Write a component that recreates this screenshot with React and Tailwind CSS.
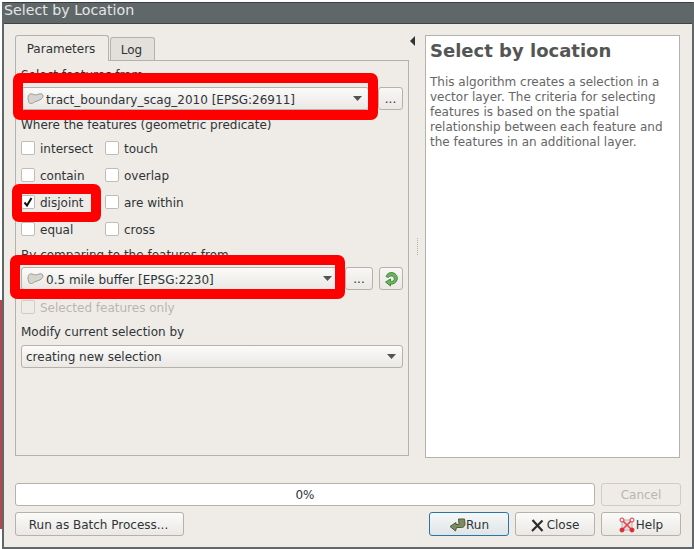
const LayerIcon = () => (
  <svg width="17" height="12" viewBox="0 0 17 12" className="shrink-0">
    <path d="M1 4.5C1 1.5 3 0.5 5 1C7.5 1.8 9 2.4 11.5 1.2C13.5 0.4 16 0.6 16 3.2C16 5.2 14.3 5.8 13 6.8C11.5 7.8 9.5 8 7.5 9C5 11 2.2 11.4 1.6 8.5C1.3 7 1 6 1 4.5Z" fill="#d6d4cf" stroke="#9c9b95" strokeWidth="1" />
  </svg>
);

const Caret = () => (
  <svg width="9" height="5" viewBox="0 0 9 5" className="shrink-0"><path d="M0 0H9L4.5 5Z" fill="#55534f" /></svg>
);

const Combo = ({ className, children }) => (
  <div className={`h-[23px] flex items-center justify-between pl-[5px] pr-[6px] rounded-[3px] border border-[#b5b1ab] bg-gradient-to-b from-[#fbfbfa] to-[#ebe8e5] shrink-0 ${className}`}>
    <div className="flex items-center gap-[2px] whitespace-nowrap">{children}</div>
    <Caret />
  </div>
);

const Dots = ({ className }) => (
  <div className={`h-[23px] rounded-[3px] border border-[#b5b1ab] bg-gradient-to-b from-[#f8f7f5] to-[#ebe8e5] flex items-center justify-center text-[12px] shrink-0 ${className}`}>...</div>
);

const Check = ({ label, checked, disabled }) => (
  <div className={`flex items-center gap-[5px] h-[14px] whitespace-nowrap ${disabled ? "text-[#b9b6b2]" : ""}`}>
    <div className={`w-[14px] h-[14px] rounded-[2px] border flex items-center justify-center shrink-0 ${disabled ? "border-[#cfccc8] bg-[#efebe7]" : "border-[#c0bdb8] bg-white"}`}>
      {checked && (
        <svg width="10" height="10" viewBox="0 0 10 10"><path d="M1.5 5.5L4 8.5L8.5 1" fill="none" stroke="#111" strokeWidth="2" /></svg>
      )}
    </div>
    <span className="pt-[2px]">{label}</span>
  </div>
);

const Btn = ({ className = "", children }) => (
  <div className={`h-[24px] rounded-[3px] border flex items-center justify-center text-[12px] ${className || ""}`}>{children}</div>
);

const plain = "border-[#b5b1ab] bg-gradient-to-b from-[#fbfbfa] to-[#ebe8e5]";

const Highlight = ({ className }) => (
  <div className={`absolute border-[10px] border-[#ff0000] rounded-[7px] pointer-events-none ${className}`} />
);

export default function App() {
  return (
    <div className="relative w-[694px] h-[549px] flex bg-white overflow-hidden font-['DejaVu_Sans',sans-serif] text-[12px] leading-[14px] text-[#2e3436]">
      <div className="w-[2px] flex flex-col pt-[300px]">
        <div className="h-[229px] bg-[#b5474f]" />
      </div>
      <div className="flex-1 mt-[2px] flex flex-col border-t border-t-[#3c3f40] border-l-2 border-r-2 border-b-2 border-[#5f6769] bg-[#efebe7]">
        <div className="h-[21px] shrink-0 bg-[#5f6769] border-b border-b-[#3f4445] pl-[0px] pb-[6px] flex items-center text-[#e6e6e6] text-[14.2px] leading-[18px]">Select by Location</div>

        <div className="flex pl-[11px] pt-[11px] h-[434px] shrink-0">
          <div className="w-[394px] shrink-0 flex flex-col">
            <div className="flex h-[25px] items-end relative z-10">
              <div className="w-[94px] h-[26px] -mb-px pr-[2px] bg-[#efebe7] border border-b-0 border-[#b5b1ab] rounded-t-[3px] flex items-center justify-center">Parameters</div>
              <div className="w-[45px] h-[23px] ml-px pr-[2px] bg-[#e3dfda] border border-b-0 border-[#b5b1ab] rounded-t-[3px] flex items-center justify-center pt-[2px]">Log</div>
            </div>
            <div className="h-[396px] border border-[#b5b1ab] px-[5px] pt-[6px] flex flex-col">
              <div className="h-[14px] leading-[16px]">Select features from</div>
              <div className="flex mt-[6px] gap-[9px]">
                <Combo className="w-[348px]"><LayerIcon /><span className="pt-[2px]">tract_boundary_scag_2010 [EPSG:26911]</span></Combo>
                <Dots className="w-[25px]" />
              </div>
              <div className="h-[14px] mt-[7px] leading-[16px]">Where the features (geometric predicate)</div>
              <div className="grid grid-cols-[84px_84px] gap-y-[13px] mt-[10px]">
                <Check label="intersect" />
                <Check label="touch" />
                <Check label="contain" />
                <Check label="overlap" />
                <Check label="disjoint" checked />
                <Check label="are within" />
                <Check label="equal" />
                <Check label="cross" />
              </div>
              <div className="h-[14px] mt-[11px] leading-[16px]">By comparing to the features from</div>
              <div className="flex mt-[6px]">
                <Combo className="w-[318px]"><LayerIcon /><span className="pt-[2px]">0.5 mile buffer [EPSG:2230]</span></Combo>
                <Dots className="w-[28px] ml-[6px]" />
                <div className="w-[24px] h-[23px] ml-[6px] rounded-[3px] border border-[#b5b1ab] bg-gradient-to-b from-[#f8f7f5] to-[#ebe8e5] flex items-center justify-center shrink-0">
                  <svg width="16" height="16" viewBox="0 0 16 16">
                    <path d="M3 5.5C4 2.5 7 1 10 1.8C13.5 2.8 15 6 14 9C13 12 10 13.5 7.5 13V15L2.5 11L7.5 8V10.2C9 10.8 11 10 11.3 8.2C11.6 6.6 10.5 5 8.5 5C7 5 6.2 5.5 5.5 6.5Z" fill="#6cb35f" stroke="#3f8a3a" strokeWidth="1" />
                  </svg>
                </div>
              </div>
              <div className="mt-[10px]"><Check label="Selected features only" disabled /></div>
              <div className="h-[14px] mt-[10px] leading-[16px]">Modify current selection by</div>
              <div className="flex mt-[7px]">
                <Combo className="w-[382px]"><span className="-ml-px">creating new selection</span></Combo>
              </div>
            </div>
          </div>

          <div className="w-[16px] shrink-0 flex flex-col items-center">
            <svg width="6" height="10" viewBox="0 0 6 10" className="mt-[1px] -ml-[8px]"><path d="M5 0V10L0 5Z" fill="#2e3436" /></svg>
            <div className="w-px h-[17px] mt-[192px] border-l border-dotted border-[#b5b1ab]" />
          </div>

          <div className="w-[255px] h-[423px] shrink-0 border border-[#b5b1ab] bg-white px-[4px] pt-[4px] text-[#666]">
            <div className="text-[18px] leading-[21px] font-bold text-[#555]">Select by location</div>
            <p className="mt-[14px] leading-[15px]">This algorithm creates a selection in a vector layer. The criteria for selecting features is based on the spatial relationship between each feature and the features in an additional layer.</p>
          </div>
        </div>

        <div className="pl-[11px] pr-[11px] flex flex-col gap-[6px] mt-[25px]">
          <div className="flex gap-[6px]">
            <div className="w-[580px] h-[23px] rounded-[3px] border border-[#b5b1ab] bg-white flex items-center justify-center">0%</div>
            <div className="w-[80px] h-[23px] rounded-[3px] border border-[#cfccc8] bg-[#efebe7] flex items-center justify-center text-[#b9b6b2]">Cancel</div>
          </div>
          <div className="flex gap-[6px]">
            <Btn className={`w-[169px] pt-[2px] pr-[2px] ${plain}`}>Run as Batch Process...</Btn>
            <div className="w-[233px]" />
            <Btn className="w-[80px] pt-[2px] border-[#2a75a8] bg-gradient-to-b from-[#f6f8f8] to-[#dfe4e6]">
              <svg width="17" height="14" viewBox="0 0 17 14"><path d="M9.5 1H15.5L16 6C16 8 14.5 9.5 12.5 9.5H7.5L6.5 13L1 8.5L7 4.5V6.5H10Z" fill="#7d8a62" stroke="#4d5a38" strokeWidth="1" /></svg>
              Run
            </Btn>
            <Btn className={`w-[80px] pt-[2px] gap-[3px] ${plain}`}>
              <svg width="13" height="13" viewBox="0 0 13 13"><path d="M1.5 1L11.5 12M11.5 1.5L1 12" stroke="#2b2b2b" strokeWidth="2.2" fill="none" /></svg>
              Close
            </Btn>
            <Btn className={`w-[80px] pt-[2px] gap-[1px] ${plain}`}>
              <svg width="16" height="16" viewBox="0 0 16 16">
                <rect x="3" y="3" width="10" height="10" fill="#e2e0dd" stroke="#b8b5b0" />
                <path d="M3 3L13 13M13 3L3 13" stroke="#e8414a" strokeWidth="1.6" />
                <circle cx="3" cy="3" r="2" fill="#fff" stroke="#e02a33" />
                <circle cx="13" cy="3" r="2" fill="#fff" stroke="#e02a33" />
                <circle cx="3" cy="13" r="2" fill="#e02a33" stroke="#e02a33" />
                <circle cx="13" cy="13" r="2" fill="#e02a33" stroke="#e02a33" />
              </svg>
              Help
            </Btn>
          </div>
        </div>
      </div>

      <Highlight className="left-[13px] top-[73px] w-[365px] h-[47px]" />
      <Highlight className="left-[12px] top-[184px] w-[89px] h-[38px]" />
      <Highlight className="left-[10px] top-[255px] w-[335px] h-[44px]" />
    </div>
  );
}
